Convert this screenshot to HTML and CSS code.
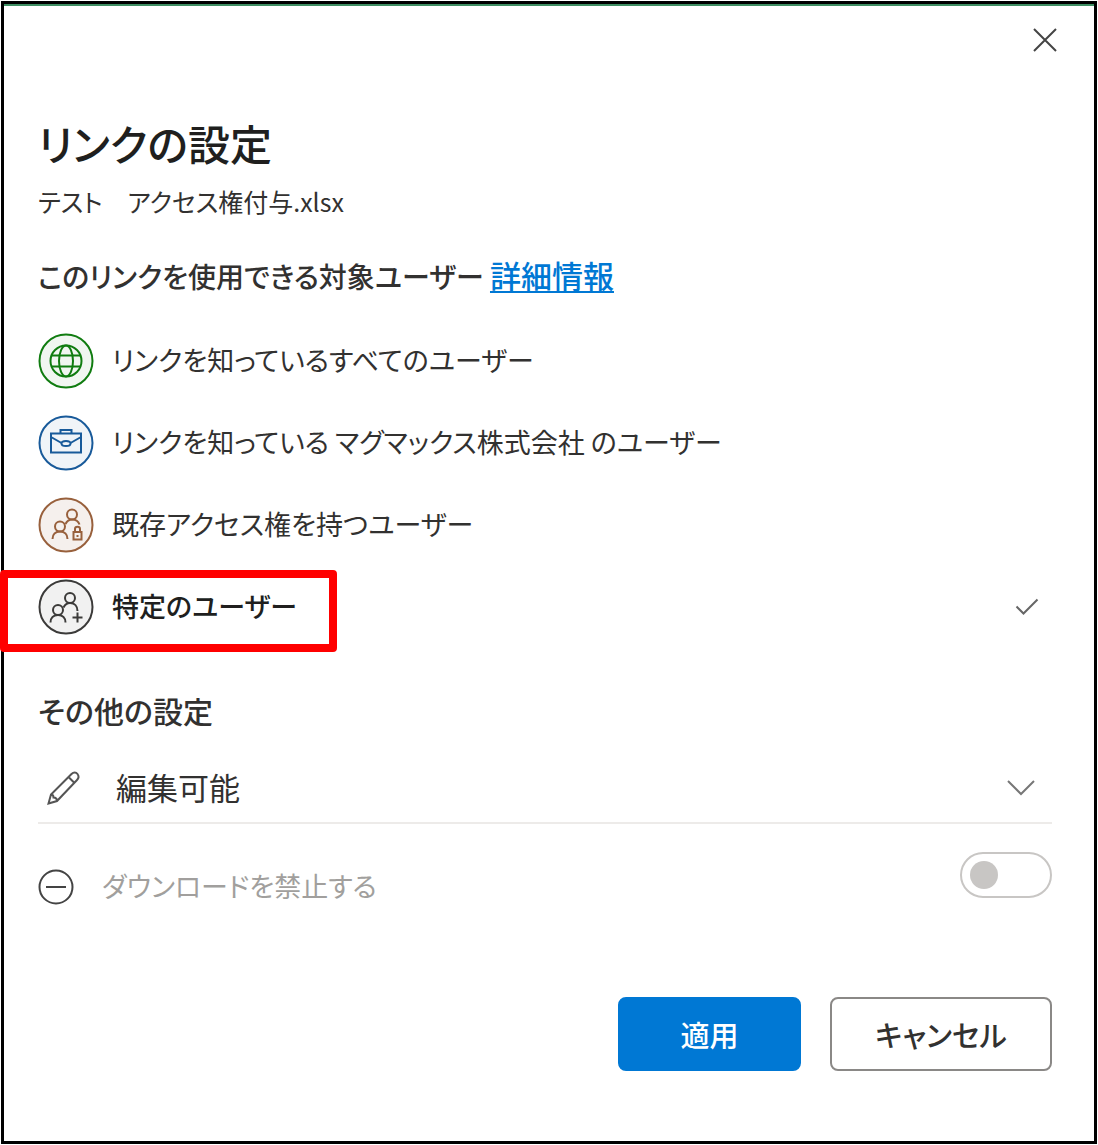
FILE: index.html
```html
<!DOCTYPE html>
<html lang="ja">
<head>
  <meta charset="UTF-8">
  <meta name="viewport" content="width=device-width, initial-scale=1">
  <title>リンクの設定</title>
  <link rel="stylesheet" href="styles.css">
</head>
<body>
  <main class="dialog">
    <header class="dialog-header">
      <button class="close" type="button" aria-label="閉じる">
        <svg width="24" height="24" viewBox="0 0 24 24"><path d="M1 1l22 22M23 1L1 23"/></svg>
      </button>
    </header>

    <form class="content">
      <h1>リンクの設定</h1>
      <p class="file-name">テスト　アクセス権付与.xlsx</p>

      <h2 class="audience">このリンクを使用できる対象ユーザー <a href="#">詳細情報</a></h2>

      <!-- 共有範囲 -->
      <div class="scopes">
        <label class="scope">
          <input type="radio" name="scope" value="anyone">
          <svg class="scope-icon green" viewBox="0 0 56 56">
            <circle class="ring" cx="28" cy="28" r="26.5"/>
            <circle cx="28" cy="28" r="15.5"/>
            <ellipse cx="28" cy="28" rx="7" ry="15.5"/>
            <path d="M14 22.5h28M14 33.5h28"/>
          </svg>
          <span>リンクを知っているすべてのユーザー</span>
        </label>
        <label class="scope">
          <input type="radio" name="scope" value="company">
          <svg class="scope-icon blue" viewBox="0 0 56 56">
            <circle class="ring" cx="28" cy="28" r="26.5"/>
            <path d="M13 18.5h30v19H13zM22.5 18.5V15h11v3.5"/>
            <path d="M13 22l10.500 6M43 22l-10.500 6"/>
            <ellipse cx="28" cy="28.5" rx="4.500" ry="2.500"/>
          </svg>
          <span>リンクを知っている マグマックス株式会社 のユーザー</span>
        </label>
        <label class="scope">
          <input type="radio" name="scope" value="existing">
          <svg class="scope-icon brown" viewBox="0 0 56 56">
            <circle class="ring" cx="28" cy="28" r="26.5"/>
            <circle cx="34" cy="17.5" r="5"/>
            <circle cx="22" cy="29.5" r="5"/>
            <path d="M14.500 42c0-4.500 3-7.500 7.500-7.500s7.500 3 7.500 7.500M27.500 27c1.500-3 3.500-4.500 6.500-4.500 4 0 6.500 2 7.500 5"/>
            <path d="M35.500 35h8v7.500h-8zM37 35v-3c0-3 5-3 5 0v3M39.500 38v2"/>
          </svg>
          <span>既存アクセス権を持つユーザー</span>
        </label>
        <label class="scope highlighted">
          <input type="radio" name="scope" value="specific" checked>
          <svg class="scope-icon gray" viewBox="0 0 56 56">
            <circle class="ring" cx="28" cy="28" r="26.5"/>
            <circle cx="32" cy="19" r="5"/>
            <circle cx="20" cy="31" r="5"/>
            <path d="M12.500 43.500c0-4.500 3-7.500 7.500-7.500s7.500 3 7.500 7.500M25.500 28.500c1.500-3 3.500-4.500 6.500-4.500 4.500 0 7.500 3 7.500 8M39.500 33.500v10M34.500 38.500h10"/>
          </svg>
          <span>特定のユーザー</span>
          <svg class="check" width="24" height="18" viewBox="0 0 24 18"><path d="M1.500 8.500l7 7L22.500 1.500"/></svg>
        </label>
      </div>

      <h2>その他の設定</h2>

      <div class="permission">
        <svg class="pencil" width="36" height="36" viewBox="0 0 36 36">
          <path d="M2.500 33.500l2.500-9L25.500 4c2-2 4.500-2 6 0s1.500 4-.5 6L11 31zM22.500 7l6 6M5 24.500c1.500 0 2.500 1 2.500 3 2 0 3.500 1.500 3.500 3.500"/>
        </svg>
        <select aria-label="権限">
          <option>編集可能</option>
          <option>表示可能</option>
        </select>
        <svg class="chevron" width="28" height="16" viewBox="0 0 28 16"><path d="M1 1l13 13L27 1"/></svg>
      </div>

      <div class="download">
        <svg width="36" height="36" viewBox="0 0 36 36"><circle cx="18" cy="18" r="16.500"/><path d="M8 18h20"/></svg>
        <label for="block-download">ダウンロードを禁止する</label>
        <input type="checkbox" role="switch" id="block-download" disabled>
      </div>

      <div class="actions">
        <button class="primary" type="button">適用</button>
        <button class="secondary" type="button">キャンセル</button>
      </div>
    </form>
  </main>
</body>
</html>
```
FILE: styles.css
```css
*,
*::before,
*::after {
  box-sizing: border-box;
}
body {
  margin: 0;
  padding: 1px;
  background: #fff;
  color: #323130;
  font-family: "Noto Sans CJK JP", sans-serif;
  font-size: 27px;
  font-feature-settings: "palt";
}
svg {
  flex: none;
  fill: none;
  stroke: #444;
  stroke-width: 2;
}
.dialog {
  min-height: calc(100vh - 2px);
  border: 3px solid #000;
}
.dialog-header {
  display: flex;
  justify-content: flex-end;
  border-top: 2px solid #3f8f63;
  padding: 12px 27px 0 0;
}
.close {
  display: flex;
  padding: 10px;
  border: 0;
  background: none;
}

/* 本文 */
.content {
  padding: 51px 42px 68px 34px;
}
h1 {
  margin: 0;
  color: #201f1e;
  font-size: 42px;
  font-weight: 500;
  line-height: 60px;
}
.file-name {
  margin: 8px 0 32px;
  font-size: 25px;
  line-height: 40px;
}
h2 {
  margin: 0;
  font-size: 30px;
  font-weight: 500;
  line-height: 44px;
}
.audience {
  font-size: 28px;
}
.audience a {
  color: #0078d4;
  font-size: 31px;
  text-decoration-thickness: 2px;
  text-underline-offset: 3px;
}

/* 共有範囲 */
.scopes {
  margin: 22px 0 40px;
}
.scope {
  position: relative;
  display: flex;
  align-items: center;
  gap: 18px;
  height: 82px;
}
.scope span,
.download label {
  padding-bottom: 4px;
}
.scope input {
  position: absolute;
  opacity: 0;
}
.scope input:checked ~ span {
  color: #201f1e;
  font-weight: 500;
}
.scope-icon {
  width: 56px;
  height: 56px;
}
.green {
  stroke: #107c10;
}
.green .ring {
  fill: #f1f6f1;
}
.blue {
  stroke: #185a9a;
}
.blue .ring {
  fill: #f0f4f8;
}
.brown {
  stroke: #98603c;
}
.brown .ring {
  fill: #f5f0ed;
}
.gray {
  stroke: #3b3a39;
}
.gray .ring {
  fill: #f1f1f1;
}
.check {
  margin-left: auto;
  margin-right: 13px;
  stroke: #666;
}
.highlighted::after {
  content: "";
  position: absolute;
  top: 4px;
  left: -38px;
  width: 337px;
  height: 82px;
  border: 8px solid #f00;
  border-radius: 4px;
}

/* その他の設定 */
.permission {
  display: flex;
  align-items: center;
  margin: 22px 0 28px;
  padding: 0 17px 0 8px;
  border-bottom: 2px solid #edebe9;
}
.pencil {
  stroke: #555;
}
.permission select {
  flex: 1;
  height: 68px;
  margin-right: -28px;
  padding: 0 0 4px 34px;
  appearance: none;
  border: 0;
  background: none;
  color: inherit;
  font: inherit;
  font-size: 31px;
}
.chevron {
  stroke: #777;
  pointer-events: none;
}
.download {
  display: flex;
  align-items: center;
  gap: 28px;
  height: 70px;
  color: #a19f9d;
}
.download input {
  display: flex;
  align-items: center;
  align-self: flex-start;
  width: 92px;
  height: 46px;
  margin: 0 0 0 auto;
  padding-left: 8px;
  appearance: none;
  border: 2px solid #c8c6c4;
  border-radius: 23px;
}
.download input::before {
  content: "";
  width: 28px;
  height: 28px;
  border-radius: 50%;
  background: #c8c6c4;
}

/* ボタン */
.actions {
  display: flex;
  justify-content: flex-end;
  gap: 29px;
  margin-top: 75px;
}
.actions button {
  min-width: 183px;
  height: 74px;
  padding: 0 40px;
  border: 2px solid #8a8886;
  border-radius: 8px;
  background: #fff;
  color: #323130;
  font: inherit;
  font-size: 29px;
  font-weight: 500;
}
.actions .secondary {
  min-width: 222px;
}
.actions .primary {
  border-color: #0078d4;
  background: #0078d4;
  color: #fff;
}
```
